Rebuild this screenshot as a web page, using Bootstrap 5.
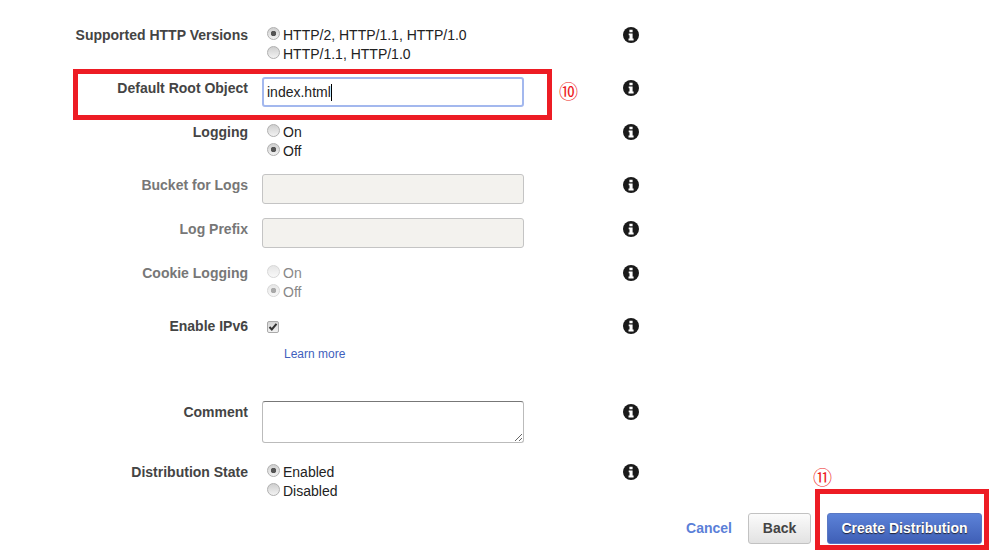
<!DOCTYPE html>
<html lang="en"><head><meta charset="utf-8"><title>Distribution settings</title>
<link href="https://cdn.jsdelivr.net/npm/bootstrap@5.3.0/dist/css/bootstrap.min.css" rel="stylesheet">
<style>
html,body{height:550px;overflow:hidden}
body{background:#fff;font-family:"Liberation Sans",Arial,sans-serif;font-size:14px;color:#222;position:relative}
.sheet{padding-top:25px}
.frow{display:flex;align-items:flex-start}
.flabel{width:248px;flex:none;text-align:right;font-weight:700;color:#444;line-height:20px;margin:0}
.flabel.dim{color:#777}
.fctl{width:262px;margin-left:14px;flex:none;line-height:19px}
.fctl>.opt:first-child{margin-top:1px}
.finfo{margin-left:99px;flex:none;display:block;margin-top:2px}
.rh-a{height:53px}.rh-b{height:44px}.rh-c{height:53px}.rh-d{height:44px}.rh-e{height:53px}.rh-f{height:86px}.rh-g{height:60px}.rh-h{height:51px}
.opt{display:flex;align-items:center;height:19px;padding-left:5px;gap:3px;margin:0}
.opt.dim{color:#888}
.rad{appearance:none;width:13px;height:13px;border-radius:50%;border:1px solid #b0b0b0;background:linear-gradient(#cfcfcf,#f2f2f2);margin:-4px 0 0;flex:none}
.rad:checked{background:radial-gradient(circle,#555 0 2.500px,transparent 3px),linear-gradient(#cfcfcf,#f2f2f2)}
.rad:disabled{opacity:.5}
.fbox{display:block;width:262px;height:30px;padding:0 5px;border:1px solid #bbb;border-radius:3px;font:14px "Liberation Sans",Arial,sans-serif;color:#222;background:#fff;outline:0;margin:-1px 0 0}
.fbox.focusbox{border:2px solid #a3b8ee;padding:0 3px}
.fbox:disabled{background:#f3f2ee;border-color:#c4c4c4}
.caret{display:inline-block;width:1px;height:17px;background:#000}
.ftext{height:42px;resize:both;border-color:#777 #bbb #bbb}
.chk{display:block;width:12px;height:12px;margin:6px 0 0 5px;border:1px solid #aaa;border-radius:2px;background:linear-gradient(#d4d4d4,#f2f2f2)}
.tick{display:block}
.chkwrap{position:relative;height:24px;margin-top:-1px}
.learn{display:block;font-size:12px;margin-left:22px;color:#3f5fbd;text-decoration:none}
.fbar{display:flex;align-items:center;justify-content:flex-end;padding-right:11px;gap:16px}
.lnk{font-weight:700;color:#5b7fd8;text-decoration:none}
.bk{height:31px;width:63px;padding:0;border:1px solid #c2c2c2;border-radius:3px;background:linear-gradient(#fbfbfb,#e2e2e2);font-weight:700;color:#444;font-size:14px}
.go{height:31px;width:155px;padding:0;border:1px solid #5a78c4;border-radius:3px;background:linear-gradient(#5c82d8,#3f5fb6);font-weight:700;color:#fff;font-size:14px;text-shadow:0 1px 1px #223}
.redbox{position:absolute;border:5px solid #ed1c24;pointer-events:none}
.rb1{left:73px;top:69px;width:479px;height:51px}
.rb2{left:815px;top:489px;width:174px;height:61px}
.num{position:absolute;color:#ed1c24;font:19px "Noto Sans CJK JP","Noto Sans CJK SC",sans-serif;line-height:20px}
.n1{left:559px;top:81px}.n2{left:813px;top:467px}
</style></head><body>
<svg width="0" height="0" class="position-absolute"><defs><symbol id="inf" viewBox="0 0 16 16"><circle cx="8" cy="8" r="8" fill="#1a1a1a"/><path fill="#fff" d="M6.400 2.800h3.200v2.400H6.400zM5.700 6.400h3.900v5.200h1v1.800H5.500v-1.800h1V8.200H5.700z"/></symbol></defs></svg>
<main class="sheet">
<div class="frow rh-a"><label class="flabel">Supported HTTP Versions</label><div class="fctl"><label class="opt"><input class="rad" type="radio" name="v" checked>HTTP/2, HTTP/1.1, HTTP/1.0</label><label class="opt"><input class="rad" type="radio" name="v">HTTP/1.1, HTTP/1.0</label></div><svg class="finfo" width="16" height="16"><use href="#inf"/></svg></div>
<div class="frow rh-b"><label class="flabel">Default Root Object</label><div class="fctl"><div class="fbox focusbox d-flex align-items-center"><span>index.html</span><span class="caret"></span></div></div><svg class="finfo" width="16" height="16"><use href="#inf"/></svg></div>
<div class="frow rh-c"><label class="flabel">Logging</label><div class="fctl"><label class="opt"><input class="rad" type="radio" name="l">On</label><label class="opt"><input class="rad" type="radio" name="l" checked>Off</label></div><svg class="finfo" width="16" height="16"><use href="#inf"/></svg></div>
<div class="frow rh-d"><label class="flabel dim">Bucket for Logs</label><div class="fctl"><input class="fbox" disabled aria-label="Bucket for Logs"></div><svg class="finfo" width="16" height="16"><use href="#inf"/></svg></div>
<div class="frow rh-d"><label class="flabel dim">Log Prefix</label><div class="fctl"><input class="fbox" disabled aria-label="Log Prefix"></div><svg class="finfo" width="16" height="16"><use href="#inf"/></svg></div>
<div class="frow rh-e"><label class="flabel dim">Cookie Logging</label><div class="fctl"><label class="opt dim"><input class="rad" type="radio" name="c" disabled>On</label><label class="opt dim"><input class="rad" type="radio" name="c" checked disabled>Off</label></div><svg class="finfo" width="16" height="16"><use href="#inf"/></svg></div>
<div class="frow rh-f"><label class="flabel">Enable IPv6</label><div class="fctl"><div class="chkwrap"><span class="chk"><svg class="tick" width="10" height="10" viewBox="0 0 10 10"><path d="M1.500 5l2.300 2.500L8.500 1.800" fill="none" stroke="#333" stroke-width="2"/></svg></span></div><a class="learn" href="#">Learn more</a></div><svg class="finfo" width="16" height="16"><use href="#inf"/></svg></div>
<div class="frow rh-g"><label class="flabel">Comment</label><div class="fctl"><textarea class="fbox ftext" aria-label="Comment"></textarea></div><svg class="finfo" width="16" height="16"><use href="#inf"/></svg></div>
<div class="frow rh-h"><label class="flabel">Distribution State</label><div class="fctl"><label class="opt"><input class="rad" type="radio" name="d" checked>Enabled</label><label class="opt"><input class="rad" type="radio" name="d">Disabled</label></div><svg class="finfo" width="16" height="16"><use href="#inf"/></svg></div>
<div class="fbar"><a class="lnk" href="#">Cancel</a><button class="bk" type="button">Back</button><button class="go" type="button">Create Distribution</button></div>
</main>
<div class="redbox rb1"></div><div class="redbox rb2"></div>
<span class="num n1">⑩</span><span class="num n2">⑪</span>
<script src="https://cdn.jsdelivr.net/npm/bootstrap@5.3.0/dist/js/bootstrap.bundle.min.js"></script>
</body></html>
